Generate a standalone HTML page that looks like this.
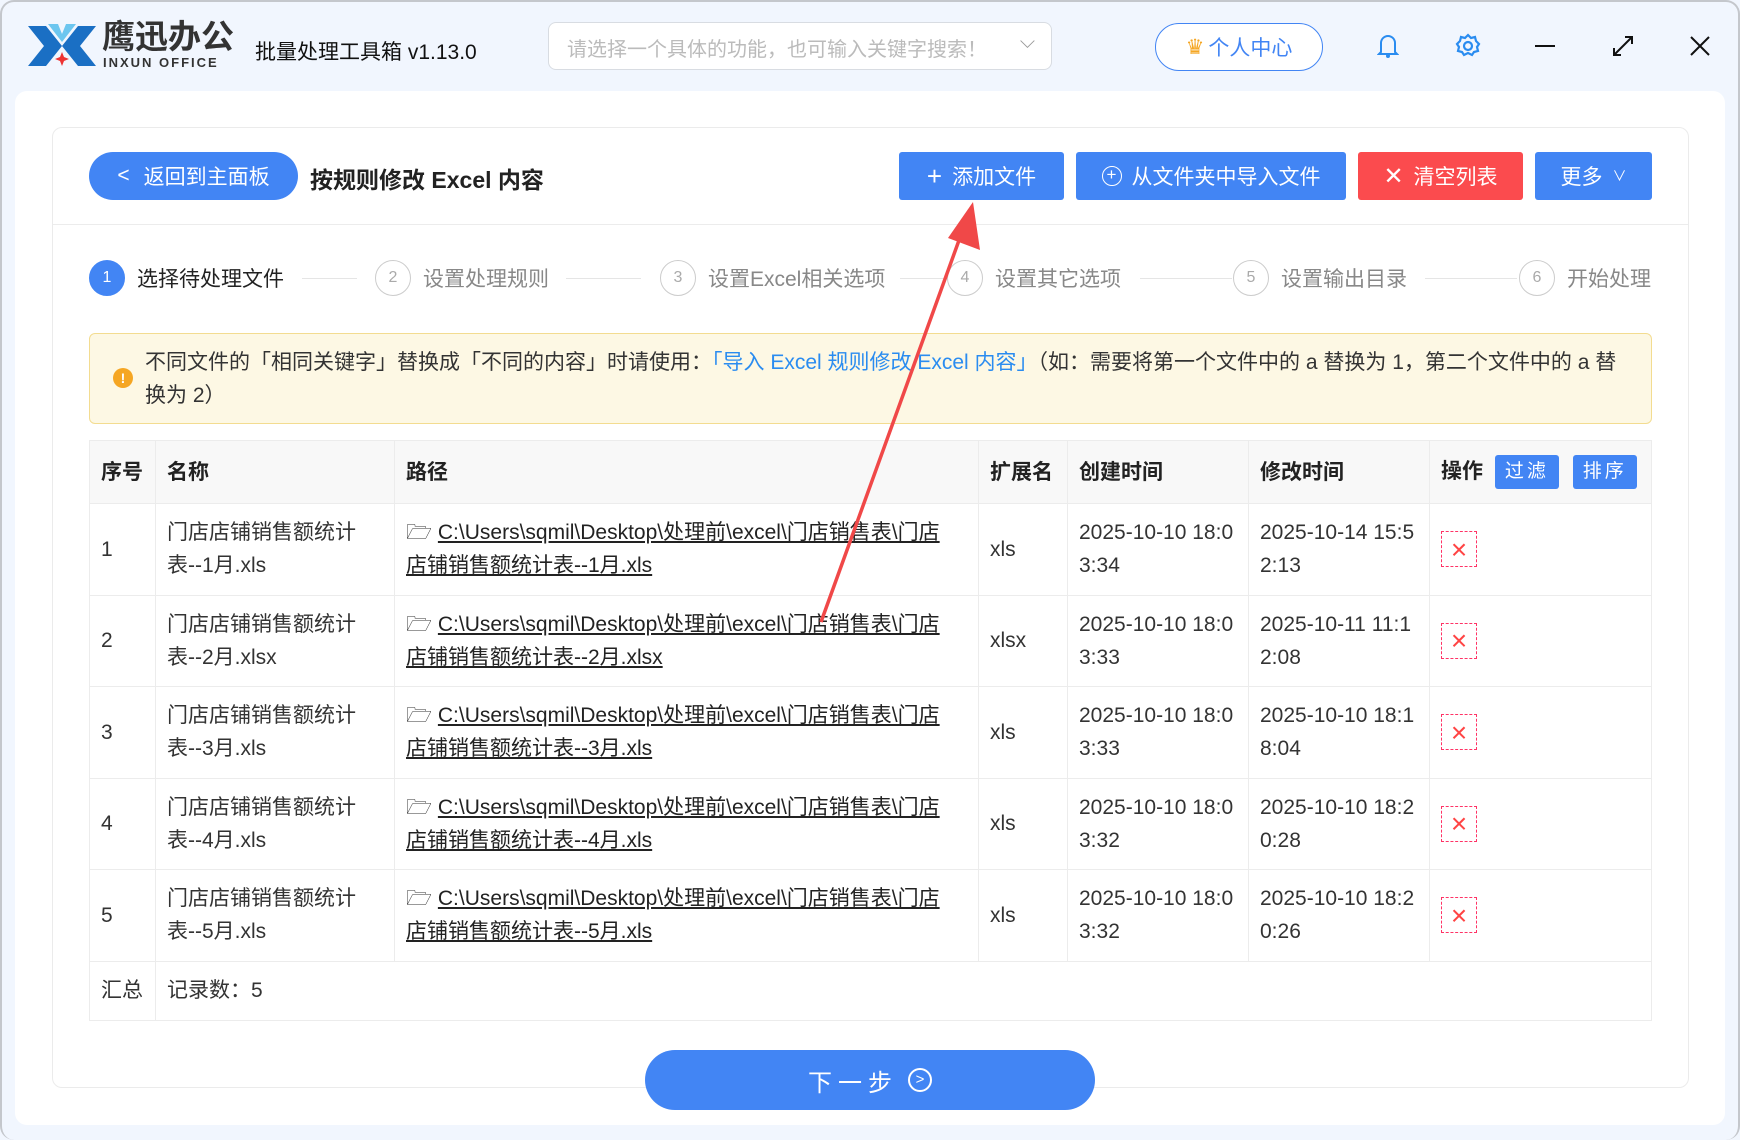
<!DOCTYPE html>
<html><head><meta charset="utf-8"><style>
*{margin:0;padding:0;box-sizing:border-box}
body{width:1740px;height:1140px;background:#f1f6fe;font-family:"Liberation Sans","Noto Sans CJK SC",sans-serif;color:#333;position:relative;overflow:hidden}
.a{position:absolute}
.btn{position:absolute;top:152px;height:48px;border-radius:3px;color:#fff;font-size:21px;display:flex;align-items:center;justify-content:center;gap:10px}
.blue{background:#4285f4}
.step{position:absolute;top:260px;display:flex;align-items:center;font-size:21px;color:#888}
.c{width:36px;height:36px;border-radius:50%;border:1.5px solid #ccc;display:flex;align-items:center;justify-content:center;font-size:16px;color:#aaa;margin-right:12px;background:#fff}
.line{position:absolute;top:278px;height:1px;background:#e5e5e5}
table{position:absolute;left:89px;top:440px;width:1563px;border-collapse:collapse;font-size:21px}
td,th{border:1px solid #ececec;padding:0 11px;text-align:left;vertical-align:middle;line-height:33px}
th{background:#f8f8f8;height:63px;font-weight:bold;color:#222}
tr.r td{height:91.5px;color:#333}
.p{text-decoration:underline;color:#222}
.del{width:36px;height:36px;border:1.5px dashed #f36;display:flex;align-items:center;justify-content:center;color:#f44;font-size:28px;margin-left:0}
.sm{display:inline-block;background:#4285f4;color:#fff;font-weight:normal;font-size:19px;padding:0 10px;height:34px;line-height:34px;border-radius:3px;letter-spacing:3px;vertical-align:middle}
</style></head><body>
<div class="a" style="left:0;top:0;width:1740px;height:1140px;border:2px solid #c4c7cc;border-radius:14px;border-bottom:none;pointer-events:none"></div>
<!-- logo -->
<svg class="a" style="left:28px;top:22px" width="68" height="46" viewBox="0 0 68 46"><path d="M0 4h18l16 20-16 20H0l16-20z" fill="#1a6fc4"/><path d="M68 4H50L34 24l16 20h18L52 24z" fill="#1a6fc4"/><path d="M20 2h10l4 10 4-10h10L34 20z" fill="#6cc6ef"/><path d="M34 30l2 5 5 2-5 2-2 5-2-5-5-2 5-2z" fill="#e33"/></svg>
<div class="a" style="left:102px;top:20px;font-size:33px;line-height:33px;font-weight:bold;color:#333;letter-spacing:0px">鹰迅办公</div>
<div class="a" style="left:103px;top:56px;font-size:13px;line-height:14px;font-weight:bold;color:#333;letter-spacing:2px">INXUN OFFICE</div>
<div class="a" style="left:255px;top:36px;font-size:21px;color:#111">批量处理工具箱 v1.13.0</div>
<div class="a" style="left:548px;top:22px;width:504px;height:48px;border:1px solid #d8dce2;border-radius:8px;background:#fff;font-size:20px;color:#bbb;padding:10px 18px">请选择一个具体的功能，也可输入关键字搜索！<span style="position:absolute;right:16px;top:8px;color:#999">⌵</span></div>
<div class="a" style="left:1155px;top:23px;width:168px;height:48px;border:1.5px solid #4285f4;border-radius:24px;background:#fff;color:#4285f4;font-size:21px;display:flex;align-items:center;justify-content:center;gap:4px"><span style="color:#f5a623">♛</span>个人中心</div>
<svg class="a" style="left:1377px;top:33px" width="22" height="26" viewBox="0 0 22 26"><path d="M4 19V10a7 7 0 0114 0v9l2 2H2z" fill="none" stroke="#2a8cf0" stroke-width="2"/><circle cx="11" cy="23" r="2" fill="#2a8cf0"/></svg>
<svg class="a" style="left:1455px;top:33px" width="26" height="26" viewBox="0 0 26 26"><circle cx="13" cy="13" r="4" fill="none" stroke="#2a8cf0" stroke-width="2.2"/><path d="M13 2l3 3 4-1 1 4 3 3-2 3 1 4-4 1-2 3-4-2-4 2-2-3-4-1 1-4-2-3 3-3 1-4 4 1z" fill="none" stroke="#2a8cf0" stroke-width="2.2"/></svg>
<div class="a" style="left:1535px;top:45px;width:20px;height:2px;background:#111"></div>
<svg class="a" style="left:1612px;top:35px" width="22" height="22"><path d="M2 20L20 2M13 2h7v7M2 13v7h7" fill="none" stroke="#111" stroke-width="2"/></svg>
<svg class="a" style="left:1690px;top:36px" width="20" height="20"><path d="M1 1L19 19M19 1L1 19" stroke="#111" stroke-width="2"/></svg>

<div class="a" style="left:15px;top:91px;width:1710px;height:1034px;background:#fff;border-radius:12px"></div>
<div class="a" style="left:52px;top:127px;width:1637px;height:961px;border:1px solid #ebebeb;border-radius:10px"></div>
<div class="a" style="left:89px;top:152px;width:209px;height:48px;border-radius:24px;background:#4285f4;color:#fff;font-size:21px;display:flex;align-items:center;justify-content:center;gap:14px"><span>&lt;</span>返回到主面板</div>
<div class="a" style="left:310px;top:161px;font-size:23px;font-weight:bold;color:#222">按规则修改 Excel 内容</div>
<div class="btn blue" style="left:899px;width:165px"><span style="font-size:26px;font-weight:300">+</span>添加文件</div>
<div class="btn blue" style="left:1076px;width:270px"><span style="display:inline-block;width:20px;height:20px;border:1.5px solid #fff;border-radius:50%;font-size:17px;line-height:16px;text-align:center">+</span>从文件夹中导入文件</div>
<div class="btn" style="left:1358px;width:165px;background:#fb4b4e"><span style="font-size:24px">✕</span>清空列表</div>
<div class="btn blue" style="left:1535px;width:117px">更多 <span style="font-size:14px">∨</span></div>
<div class="a" style="left:53px;top:224px;width:1635px;height:1px;background:#ececec"></div>

<div class="step" style="left:89px;color:#222"><div class="c" style="background:#4285f4;border-color:#4285f4;color:#fff">1</div>选择待处理文件</div>
<div class="line" style="left:302px;width:55px"></div>
<div class="step" style="left:375px"><div class="c">2</div>设置处理规则</div>
<div class="line" style="left:566px;width:75px"></div>
<div class="step" style="left:660px"><div class="c">3</div>设置Excel相关选项</div>
<div class="line" style="left:900px;width:45px"></div>
<div class="step" style="left:947px"><div class="c">4</div>设置其它选项</div>
<div class="line" style="left:1140px;width:92px"></div>
<div class="step" style="left:1233px"><div class="c">5</div>设置输出目录</div>
<div class="line" style="left:1425px;width:92px"></div>
<div class="step" style="left:1519px"><div class="c">6</div>开始处理</div>

<div class="a" style="left:89px;top:333px;width:1563px;height:91px;background:#fdf8e4;border:1px solid #f3dc90;border-radius:6px"></div>
<div class="a" style="left:113px;top:368px;width:20px;height:20px;border-radius:50%;background:#f5a623;color:#fff;font-size:14px;text-align:center;line-height:20px;font-weight:bold">!</div>
<div class="a" style="left:145px;top:346px;width:1500px;font-size:21px;line-height:33px;color:#333">不同文件的「相同关键字」替换成「不同的内容」时请使用：<span style="color:#2a8cf0">「导入 Excel 规则修改 Excel 内容」</span>（如：需要将第一个文件中的 a 替换为 1，第二个文件中的 a 替<br>换为 2）</div>

<table>
<tr><th style="width:66px">序号</th><th style="width:239px">名称</th><th style="width:584px">路径</th><th style="width:89px">扩展名</th><th style="width:181px">创建时间</th><th style="width:181px">修改时间</th><th>操作 <span class="sm" style="margin-left:6px">过滤</span> <span class="sm" style="margin-left:8px">排序</span></th></tr>
<tr class="r"><td>1</td><td>门店店铺销售额统计<br>表--1月.xls</td><td><span>🗁</span> <span class="p">C:\Users\sqmil\Desktop\处理前\excel\门店销售表\门店<br>店铺销售额统计表--1月.xls</span></td><td>xls</td><td>2025-10-10 18:0<br>3:34</td><td>2025-10-14 15:5<br>2:13</td><td><div class="del">×</div></td></tr>
<tr class="r"><td>2</td><td>门店店铺销售额统计<br>表--2月.xlsx</td><td><span>🗁</span> <span class="p">C:\Users\sqmil\Desktop\处理前\excel\门店销售表\门店<br>店铺销售额统计表--2月.xlsx</span></td><td>xlsx</td><td>2025-10-10 18:0<br>3:33</td><td>2025-10-11 11:1<br>2:08</td><td><div class="del">×</div></td></tr>
<tr class="r"><td>3</td><td>门店店铺销售额统计<br>表--3月.xls</td><td><span>🗁</span> <span class="p">C:\Users\sqmil\Desktop\处理前\excel\门店销售表\门店<br>店铺销售额统计表--3月.xls</span></td><td>xls</td><td>2025-10-10 18:0<br>3:33</td><td>2025-10-10 18:1<br>8:04</td><td><div class="del">×</div></td></tr>
<tr class="r"><td>4</td><td>门店店铺销售额统计<br>表--4月.xls</td><td><span>🗁</span> <span class="p">C:\Users\sqmil\Desktop\处理前\excel\门店销售表\门店<br>店铺销售额统计表--4月.xls</span></td><td>xls</td><td>2025-10-10 18:0<br>3:32</td><td>2025-10-10 18:2<br>0:28</td><td><div class="del">×</div></td></tr>
<tr class="r"><td>5</td><td>门店店铺销售额统计<br>表--5月.xls</td><td><span>🗁</span> <span class="p">C:\Users\sqmil\Desktop\处理前\excel\门店销售表\门店<br>店铺销售额统计表--5月.xls</span></td><td>xls</td><td>2025-10-10 18:0<br>3:32</td><td>2025-10-10 18:2<br>0:26</td><td><div class="del">×</div></td></tr>
<tr><td style="height:59px">汇总</td><td colspan="6" style="border-left:none">记录数：5</td></tr>
</table>

<div class="a" style="left:645px;top:1050px;width:450px;height:60px;border-radius:30px;background:#4285f4;color:#fff;font-size:24px;display:flex;align-items:center;justify-content:center;gap:10px;letter-spacing:6px">下一步 <span style="display:inline-block;width:24px;height:24px;border:2px solid #fff;border-radius:50%;font-size:15px;line-height:20px;text-align:center;letter-spacing:0">&gt;</span></div>

<svg class="a" style="left:0;top:0" width="1740" height="1140"><line x1="821" y1="622" x2="962" y2="232" stroke="#f04848" stroke-width="3.5"/><path d="M973 202L980 250L948 238Z" fill="#f04848"/></svg>
</body></html>
